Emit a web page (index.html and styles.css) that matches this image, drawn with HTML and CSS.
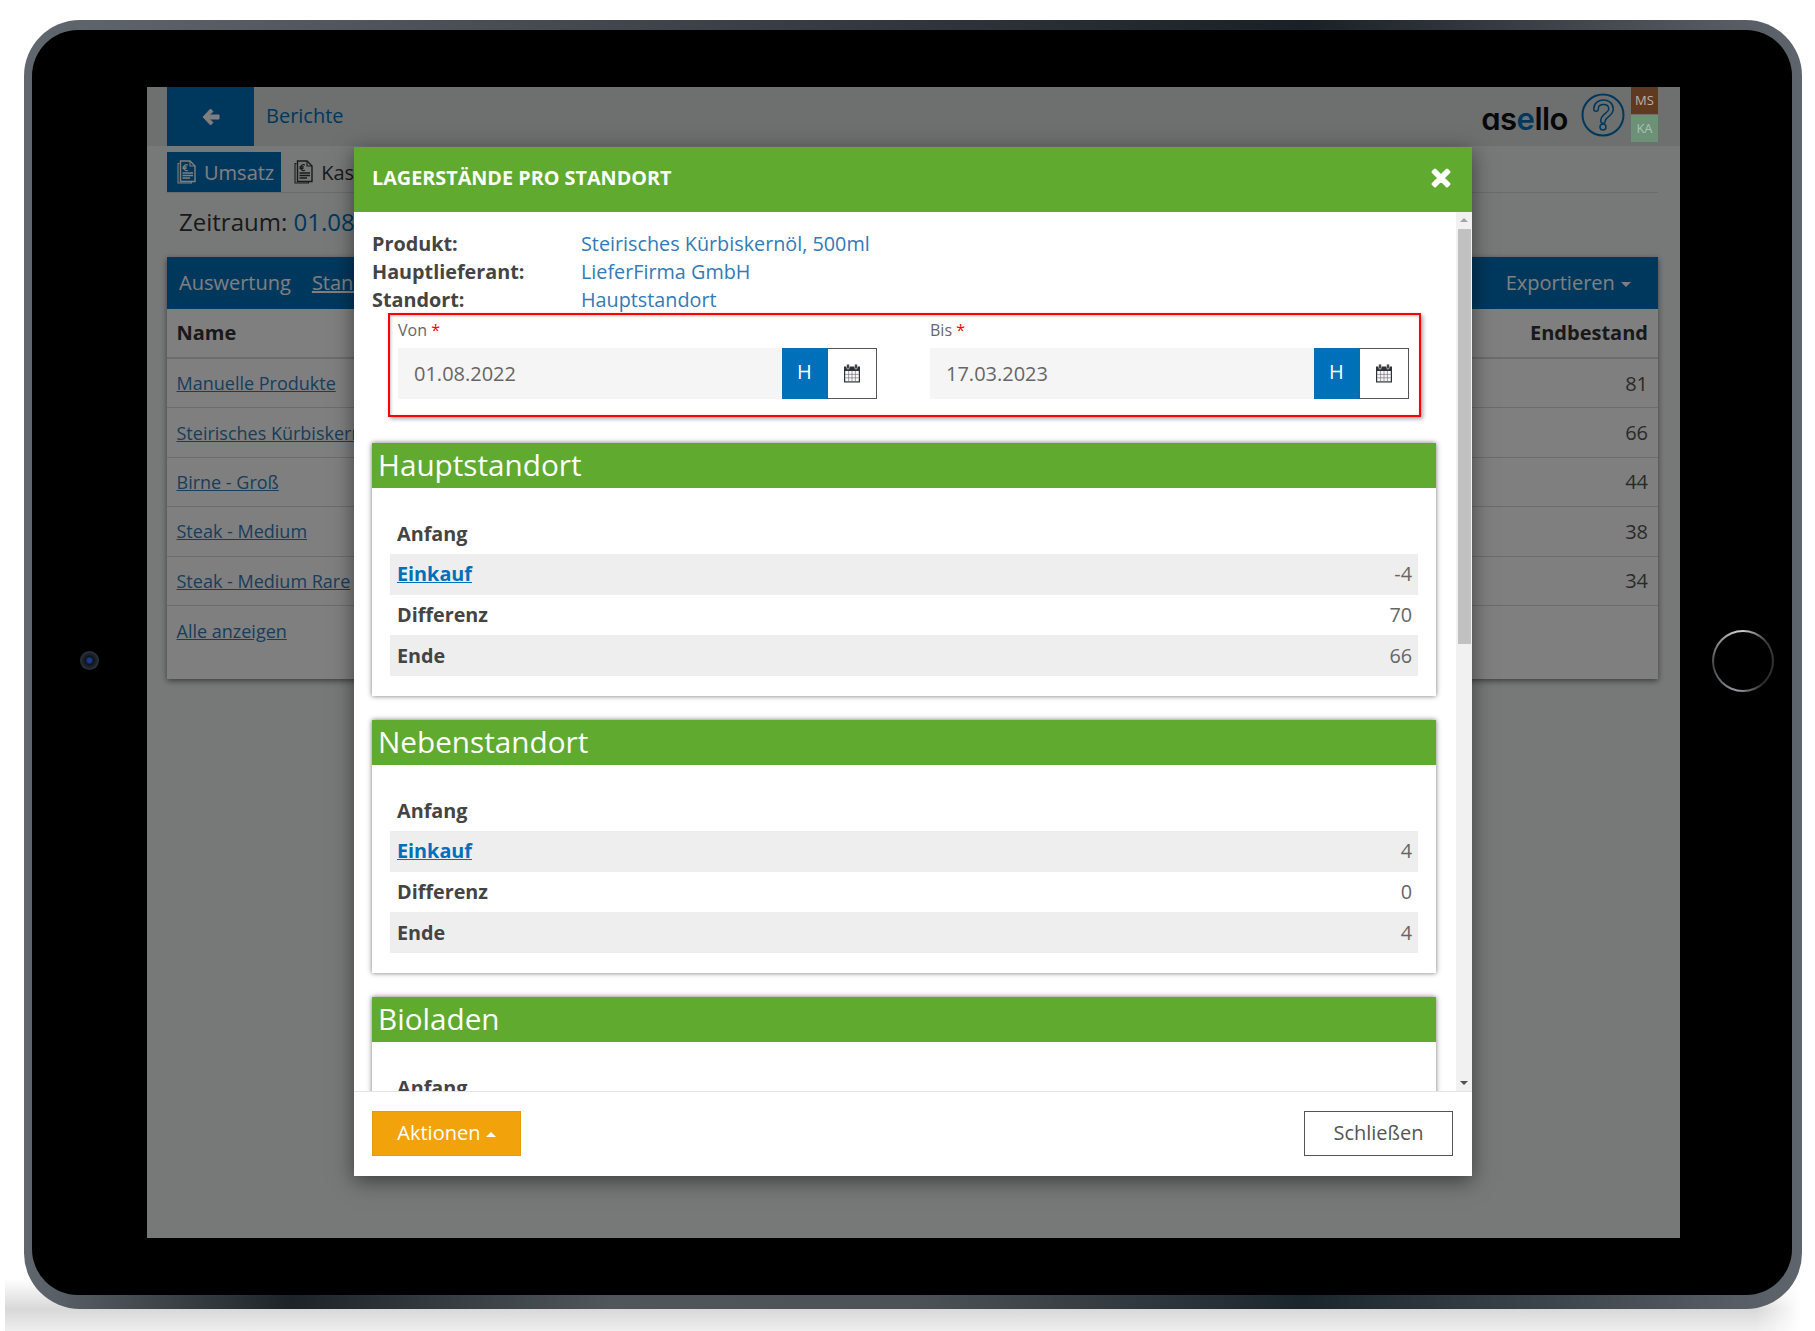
FILE: index.html
```html
<!DOCTYPE html>
<html lang="de">
<head>
  <meta charset="UTF-8">
  <title>Lagerstände pro Standort</title>
  <link rel="stylesheet" href="styles.css">
</head>
<body>
  <svg class="defs" width="0" height="0">
    <symbol id="doc" viewBox="0 0 21 24">
      <path d="M4.500 3.500H3v19.500h13.500v-1.500" fill="none" stroke="currentColor" stroke-width="1.100"/>
      <path d="M5.500 1h9.500l5 5v15.500H5.500z" fill="none" stroke="currentColor" stroke-width="1.400"/>
      <path d="M15 1v5h5" fill="none" stroke="currentColor" stroke-width="1.100"/>
      <path d="M13 5c-2.600-1-4.400.5-4.400 2.600s1.800 3.600 4.400 2.600M7.500 6.800h4.300M7.500 8.400h4" fill="none" stroke="currentColor" stroke-width="1.200"/>
      <path d="M7.500 13h10.500M7.500 15.500h10.500M7.500 18h7.500" stroke="currentColor" stroke-width="1.300"/>
    </symbol>
    <symbol id="calendar" viewBox="0 0 18 20">
      <path d="M1 3.500h16v16H1z" fill="#2d3238"/>
      <path d="M2.200 8h13.600v10.300H2.200z" fill="#faf8f6"/>
      <path d="M2.200 11.400h13.600M2.200 14.800h13.600M5.600 8v10.300M9 8v10.300M12.400 8v10.300" stroke="#77777f" stroke-width=".7"/>
      <rect x="3.700" y="1" width="2.600" height="5" rx="1.200" fill="#2d3238" stroke="#fff" stroke-width=".6"/>
      <rect x="11.700" y="1" width="2.600" height="5" rx="1.200" fill="#2d3238" stroke="#fff" stroke-width=".6"/>
    </symbol>
  </svg>

  <div class="tablet">
    <div class="bezel">
      <span class="camera"></span>
      <span class="home-button"></span>

      <div class="screen">
        <!-- App behind the dialog -->
        <header class="app-header">
          <a class="back-btn">
            <svg width="20" height="18" viewBox="0 0 20 18"><path d="M9.500 1 2 9l7.500 8 2.500-2.500L8.300 11H18V7H8.300L12 3.500z" fill="#fff" stroke="#fff" stroke-linejoin="round"/></svg>
          </a>
          <span class="app-title">Berichte</span>
          <div class="header-right">
            <span class="logo">as<span class="logo-e">e</span>llo</span>
            <svg class="help" width="44" height="44" viewBox="0 0 44 44">
              <circle cx="22" cy="22" r="20.500" fill="none" stroke="#0070ba" stroke-width="2"/>
              <path d="M15 16c0-9 15-9 15 0 0 6-8 6-8 12" fill="none" stroke="#0070ba" stroke-width="6" stroke-linecap="round"/>
              <path d="M15 16c0-9 15-9 15 0 0 6-8 6-8 12" fill="none" stroke="#dce0e0" stroke-width="3" stroke-linecap="round"/>
              <circle cx="22" cy="34" r="3" fill="#dce0e0" stroke="#0070ba" stroke-width="1.500"/>
            </svg>
            <div class="users">
              <span class="user user-ms">MS</span>
              <span class="user user-ka">KA</span>
            </div>
          </div>
        </header>

        <div class="content">
          <nav class="tabs">
            <a class="tab active"><svg width="21" height="24"><use href="#doc"/></svg>Umsatz</a>
            <a class="tab"><svg width="21" height="24"><use href="#doc"/></svg>Kassa</a>
          </nav>
          <div class="period">Zeitraum: <span class="period-value">01.08.2022 - 17.03.2023</span></div>

          <section class="panel">
            <div class="panel-head">
              <span>Auswertung</span>
              <a class="panel-link">Standorte</a>
              <span class="export">Exportieren <i class="caret"></i></span>
            </div>
            <div class="report-row report-head"><span>Name</span><span>Endbestand</span></div>
            <div class="report-row"><a>Manuelle Produkte</a><span class="report-num">81</span></div>
            <div class="report-row"><a>Steirisches Kürbiskernöl, 500ml</a><span class="report-num">66</span></div>
            <div class="report-row"><a>Birne - Groß</a><span class="report-num">44</span></div>
            <div class="report-row"><a>Steak - Medium</a><span class="report-num">38</span></div>
            <div class="report-row"><a>Steak - Medium Rare</a><span class="report-num">34</span></div>
            <div class="report-row report-more"><a>Alle anzeigen</a></div>
          </section>
        </div>

        <div class="backdrop"></div>

        <!-- Dialog -->
        <div class="modal">
          <div class="modal-head">
            <h1>Lagerstände pro Standort</h1>
            <svg class="close" width="24" height="24" viewBox="0 0 24 24"><path d="M6 4l6 6 6-6 2 2-6 6 6 6-2 2-6-6-6 6-2-2 6-6-6-6z" fill="#fff" stroke="#fff" stroke-width="3" stroke-linejoin="round"/></svg>
          </div>

          <div class="modal-body">
            <div class="scroll-content">
              <dl class="info">
                <dt>Produkt:</dt><dd>Steirisches Kürbiskernöl, 500ml</dd>
                <dt>Hauptlieferant:</dt><dd>LieferFirma GmbH</dd>
                <dt>Standort:</dt><dd>Hauptstandort</dd>
              </dl>

              <div class="date-range">
                <div class="field">
                  <label>Von <b>*</b></label>
                  <div class="input-group">
                    <div class="input">01.08.2022</div>
                    <span class="btn-h">H</span>
                    <span class="btn-cal"><svg width="18" height="20"><use href="#calendar"/></svg></span>
                  </div>
                </div>
                <div class="field">
                  <label>Bis <b>*</b></label>
                  <div class="input-group">
                    <div class="input">17.03.2023</div>
                    <span class="btn-h">H</span>
                    <span class="btn-cal"><svg width="18" height="20"><use href="#calendar"/></svg></span>
                  </div>
                </div>
              </div>

              <div class="cards">
                <section class="card">
                  <h2>Hauptstandort</h2>
                  <div class="card-body">
                    <div class="stock-row"><span>Anfang</span></div>
                    <div class="stock-row"><a>Einkauf</a><span class="num">-4</span></div>
                    <div class="stock-row"><span>Differenz</span><span class="num">70</span></div>
                    <div class="stock-row"><span>Ende</span><span class="num">66</span></div>
                  </div>
                </section>
                <section class="card">
                  <h2>Nebenstandort</h2>
                  <div class="card-body">
                    <div class="stock-row"><span>Anfang</span></div>
                    <div class="stock-row"><a>Einkauf</a><span class="num">4</span></div>
                    <div class="stock-row"><span>Differenz</span><span class="num">0</span></div>
                    <div class="stock-row"><span>Ende</span><span class="num">4</span></div>
                  </div>
                </section>
                <section class="card">
                  <h2>Bioladen</h2>
                  <div class="card-body">
                    <div class="stock-row"><span>Anfang</span></div>
                  </div>
                </section>
              </div>
            </div>

            <div class="scrollbar">
              <i class="arrow-up"></i>
              <div class="thumb"></div>
              <i class="arrow-down"></i>
            </div>
          </div>

          <div class="modal-foot">
            <button class="btn-actions">Aktionen <i class="caret-up"></i></button>
            <button class="btn-close">Schließen</button>
          </div>
        </div>
      </div>
    </div>
  </div>
  <div class="floor"></div>
</body>
</html>
```

FILE: styles.css
```css
* {
  box-sizing: border-box;
}

html, body {
  margin: 0;
  height: 1331px;
  overflow: hidden;
}

body {
  font-family: "Open Sans", "Noto Sans", sans-serif;
  background: #fff;
  color: #555;
}

.defs {
  position: absolute;
}

/* Tablet frame */
.tablet {
  height: 1289px;
  margin: 20px 13px 0 24px;
  padding: 10px 10px 14px 8px;
  border-radius: 56px;
  background:
    linear-gradient(90deg, #61676e 0, #50565c 18%, #1a2126 72%, #4c5258 92%, #5f656c 100%) top / 100% 645px no-repeat,
    linear-gradient(90deg, #61676e 0, #1c2429 15%, #50565c 33%, #4c5258 50%, #1b262c 72%, #5f656c 100%) bottom / 100% 645px no-repeat;
}

.bezel {
  position: relative;
  height: 100%;
  padding: 57px 112px 57px 115px;
  border-radius: 46px;
  background: #000;
}

.camera {
  position: absolute;
  left: 48px;
  top: 621px;
  width: 19px;
  height: 19px;
  border-radius: 50%;
  background: radial-gradient(circle, #1a3a8a 0 2px, #0c1420 4px, #45494e 100%);
}

.home-button {
  position: absolute;
  left: 1680px;
  top: 600px;
  width: 62px;
  height: 62px;
  border-radius: 50%;
  background: conic-gradient(#c8cacc 0, #3a3b3d 50deg, #2a2b2d 140deg, #9a9c9f 190deg, #444548 260deg, #c8cacc 350deg);
}

.home-button::after {
  content: "";
  display: block;
  width: 58px;
  height: 58px;
  margin: 2px;
  border-radius: 50%;
  background: #000;
}

.floor {
  position: relative;
  z-index: -1;
  height: 52px;
  margin: -30px 5px 0;
  background: linear-gradient(#fff 0, #d8d8d8 58%, #eeeeee 100%);
  -webkit-mask-image: linear-gradient(90deg, #000 0, #000 97%, transparent 99.500%);
  mask-image: linear-gradient(90deg, #000 0, #000 97%, transparent 99.500%);
}

/* App behind the dialog */
.screen {
  position: relative;
  height: 100%;
  background: #eff2f0;
  overflow: hidden;
}

.app-header {
  display: flex;
  align-items: center;
  height: 59px;
  padding: 0 22px 0 20px;
  background: #dce0e0;
}

.back-btn {
  display: flex;
  align-items: center;
  justify-content: center;
  width: 87px;
  height: 100%;
  background: #0070ba;
}

.app-title {
  margin: 0 0 3px 12px;
  font-size: 20px;
  color: #0070ba;
}

.header-right {
  display: flex;
  align-items: flex-start;
  height: 100%;
  margin-left: auto;
}

.logo {
  margin: 5px 0 0;
  font-family: Inter, sans-serif;
  font-feature-settings: "cv11";
  font-size: 31px;
  font-weight: 600;
  letter-spacing: -.5px;
  line-height: 54px;
  color: #111;
}

.logo-e {
  color: #0070ba;
}

.help {
  margin: 6px 6px 0 13px;
}

/* the initials stay readable over the backdrop */
.users {
  position: relative;
  z-index: 1;
  display: flex;
  flex-direction: column;
  gap: 1px;
  width: 27px;
}

.user {
  height: 27px;
  font-size: 13px;
  line-height: 27px;
  text-align: center;
}

.user-ms {
  background: #5f3a20;
  color: #bdb1a6;
}

.user-ka {
  background: #6d9177;
  color: #a9c2b1;
}

.content {
  padding: 6px 22px 0 20px;
}

.tabs {
  display: flex;
  height: 41px;
  border-bottom: 1px solid #d5d8d6;
}

.tab {
  display: flex;
  align-items: center;
  gap: 8px;
  height: 40px;
  padding: 0 7px 0 8px;
  font-size: 20px;
  color: #333;
}

.tab.active {
  background: #0070ba;
  color: #fff;
}

.tab + .tab {
  margin-left: 3px;
}

.period {
  height: 64px;
  padding: 12px 0 0 12px;
  font-size: 24px;
  line-height: 33px;
  color: #333;
}

.period-value {
  color: #0070ba;
}

.panel {
  height: 422px;
  background: #fff;
  box-shadow: 0 2px 6px rgba(0,0,0,.5);
}

.panel-head {
  display: flex;
  align-items: center;
  gap: 21px;
  height: 52px;
  padding: 0 27px 2px 12px;
  font-size: 20px;
  background: #0070ba;
  color: #fff;
}

.panel-link {
  text-decoration: underline;
}

.export {
  margin-left: auto;
}

.caret {
  display: inline-block;
  margin-left: 1px;
  vertical-align: middle;
  border-top: 5px solid #fff;
  border-left: 5px solid transparent;
  border-right: 5px solid transparent;
}

.report-row {
  display: flex;
  align-items: center;
  justify-content: space-between;
  height: 49.400px;
  padding: 0 10px 0 9.500px;
  font-size: 18px;
  border-bottom: 1px solid #d9d9d9;
}

.report-row a {
  color: #337ab7;
  text-decoration: underline;
}

.report-num {
  font-size: 20px;
}

.report-head {
  height: 50px;
  padding-bottom: 2px;
  font-size: 20px;
  font-weight: 700;
  color: #333;
  border-bottom-width: 2px;
}

.report-more {
  border-bottom: 0;
}

.backdrop {
  position: absolute;
  inset: 0;
  background: rgba(0,0,0,.5);
}

/* Dialog */
.modal {
  position: absolute;
  left: 207px;
  top: 60px;
  display: flex;
  flex-direction: column;
  width: 1118px;
  height: 1029px;
  background: #fff;
  box-shadow: 0 5px 20px rgba(0,0,0,.5);
}

.modal-head {
  display: flex;
  align-items: center;
  justify-content: space-between;
  height: 65px;
  padding: 0 19px 5px 18px;
  background: #5faa2f;
  color: #fff;
}

.modal-head h1 {
  margin: 0;
  font-size: 19.800px;
  font-weight: 700;
  text-transform: uppercase;
}

.close {
  margin-top: 2px;
}

.modal-body {
  display: flex;
  flex: 1;
  min-height: 0;
}

.scroll-content {
  flex: 1;
  padding: 18px 20px 0 18px;
  overflow: hidden;
}

.scrollbar {
  display: flex;
  flex-direction: column;
  align-items: center;
  width: 16px;
  padding: 0 0 6px;
  background: #f1f1f1;
}

.arrow-up {
  margin: 6px 0 7px;
  border-bottom: 4px solid #a3a3a3;
  border-left: 4px solid transparent;
  border-right: 4px solid transparent;
}

.thumb {
  width: 13px;
  height: 415px;
  background: #c1c1c1;
}

.arrow-down {
  margin-top: auto;
  border-top: 4px solid #505050;
  border-left: 4px solid transparent;
  border-right: 4px solid transparent;
}

.info {
  display: grid;
  grid-template-columns: 209px 1fr;
  grid-auto-rows: 28.200px;
  margin: 0;
  font-size: 19.800px;
  line-height: 28.200px;
}

.info dt {
  font-weight: 700;
  color: #444;
}

.info dd {
  margin: 0;
  color: #337ab7;
}

.date-range {
  display: grid;
  grid-template-columns: 1fr 1fr;
  gap: 53px;
  width: 1033.500px;
  height: 104px;
  margin: -1.600px 0 0 15.500px;
  padding: 5px 10px 0 8.500px;
  border: 2px solid #f00;
  box-shadow: 2px 2px 4px rgba(0,0,0,.35), inset 1px 1px 3px rgba(0,0,0,.25);
}

.field label {
  display: block;
  margin-bottom: 8px;
  font-size: 16px;
  line-height: 20px;
  color: #666;
}

.field label b {
  font-weight: 400;
  color: #f00;
}

.input-group {
  display: flex;
  height: 51px;
}

.input {
  flex: 1;
  padding-left: 16px;
  font-size: 20px;
  line-height: 52px;
  background: #f5f5f5;
  color: #666;
}

.btn-h {
  width: 45.500px;
  font-size: 20px;
  line-height: 48px;
  text-align: center;
  background: #0070ba;
  color: #fff;
}

.btn-cal {
  display: flex;
  align-items: center;
  justify-content: center;
  width: 50px;
  border: 1px solid #555;
}

.cards {
  display: flex;
  flex-direction: column;
  gap: 23.600px;
  margin-top: 26px;
}

.card {
  background: #fff;
  box-shadow: 0 0 5px rgba(0,0,0,.55);
}

.card h2 {
  height: 45px;
  margin: 0;
  padding-left: 6px;
  font-size: 29.700px;
  font-weight: 400;
  line-height: 44px;
  background: #5faa2f;
  color: #fff;
}

.card-body {
  padding: 25.500px 18px 20.500px;
}

.stock-row {
  display: flex;
  align-items: center;
  justify-content: space-between;
  height: 40.600px;
  padding: 0 6px 1px 7px;
  font-size: 19.800px;
  font-weight: 700;
  color: #444;
}

.stock-row:nth-child(even) {
  background: #eee;
}

.stock-row a {
  color: #0070ba;
  text-decoration: underline;
}

.num {
  font-weight: 400;
  color: #666;
}

.modal-foot {
  display: flex;
  align-items: center;
  justify-content: space-between;
  height: 85px;
  padding: 0 19px 1px 18px;
  border-top: 1px solid #e5e5e5;
}

.modal-foot button {
  width: 149px;
  height: 45px;
  padding: 0 0 2px;
  font: inherit;
  font-size: 20px;
  border-radius: 0;
}

.btn-actions {
  border: 1px solid #e49a0a;
  background: #f2a30b;
  color: #fff;
}

.caret-up {
  display: inline-block;
  vertical-align: middle;
  border-bottom: 5px solid #fff;
  border-left: 5px solid transparent;
  border-right: 5px solid transparent;
}

.btn-close {
  border: 1px solid #555;
  background: #fff;
  color: #555;
}
```
